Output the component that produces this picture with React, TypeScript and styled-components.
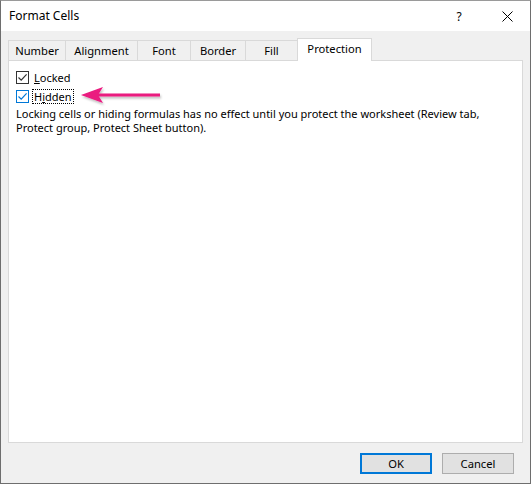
import React from "react"
import styled, { createGlobalStyle } from "styled-components"

const GlobalStyle = createGlobalStyle`
    html, body {
        margin: 0;
        padding: 0;
        background: #ffffff;
    }
    body {
        font-family: "Noto Sans", "Liberation Sans", sans-serif;
        font-size: 11px;
        color: #000000;
    }
`

const Window = styled.div`
    box-sizing: border-box;
    width: 531px;
    height: 484px;
    display: flex;
    flex-direction: column;
    border: 1px solid #6e6e6e;
    border-top-color: #9a9a9a;
    background: #f0f0f0;
`

const TitleBar = styled.div`
    height: 30px;
    flex-shrink: 0;
    display: flex;
    align-items: center;
    background: #ffffff;
    padding-left: 8px;
`

const Title = styled.div`
    flex: 1;
    font-size: 12px;
    color: #000000;
    padding-bottom: 1px;
`

const Help = styled.div`
    width: 46px;
    margin-right: 2px;
    text-align: center;
    font-size: 12px;
`

const Close = styled.div`
    width: 46px;
    display: flex;
    justify-content: center;
    align-items: center;
`

const Body = styled.div`
    flex: 1;
    display: flex;
    flex-direction: column;
    padding: 7px 7px 0 7px;
`

const TabStrip = styled.div`
    display: flex;
    align-items: flex-end;
    height: 22px;
    position: relative;
    z-index: 1;
`

const Tab = styled.div<{ $w: number; $active?: boolean }>`
    box-sizing: border-box;
    width: ${(p) => p.$w}px;
    height: ${(p) => (p.$active ? 23 : 20)}px;
    margin-left: -1px;
    margin-bottom: ${(p) => (p.$active ? -1 : 0)}px;
    padding-bottom: ${(p) => (p.$active ? 3 : 1)}px;
    display: flex;
    align-items: center;
    justify-content: center;
    background: ${(p) => (p.$active ? "#ffffff" : "#f0f0f0")};
    border: 1px solid #d9d9d9;
    border-bottom: none;
    font-size: 11.2px;
    &:first-child {
        margin-left: 0;
    }
`

const Panel = styled.div`
    flex: 1;
    position: relative;
    background: #ffffff;
    border: 1px solid #d9d9d9;
    padding: 7px 7px;
`

const Option = styled.label`
    display: flex;
    align-items: center;
    gap: 4px;
    height: 19px;
    font-size: 11px;
`

const Box = styled.span<{ $hot?: boolean }>`
    box-sizing: border-box;
    width: 13px;
    height: 13px;
    display: flex;
    align-items: center;
    justify-content: center;
    background: #ffffff;
    border: 1px solid ${(p) => (p.$hot ? "#0078d7" : "#333333")};
`

const Caption = styled.span<{ $focus?: boolean }>`
    padding: 0 1px;
    line-height: 13px;
    outline: ${(p) => (p.$focus ? "1px dotted #000000" : "none")};
    outline-offset: 0;
`

const Note = styled.p`
    margin: 1px 0 0 0;
    font-size: 11px;
    line-height: 14px;
`

const Arrow = styled.svg`
    position: absolute;
    left: 72px;
    top: 25px;
    overflow: visible;
`

const Footer = styled.div`
    box-sizing: border-box;
    height: 40px;
    flex-shrink: 0;
    display: flex;
    justify-content: flex-end;
    align-items: flex-start;
    gap: 10px;
    padding: 10px 16px 0 0;
`

const Button = styled.div<{ $default?: boolean }>`
    box-sizing: border-box;
    width: 72px;
    height: 21px;
    display: flex;
    align-items: center;
    justify-content: center;
    background: #e1e1e1;
    border: ${(p) => (p.$default ? "2px solid #0078d7" : "1px solid #adadad")};
    font-size: 11.2px;
`

const Check = ({ color }: { color: string }) => (
    <svg width="11" height="11" viewBox="0 0 11 11">
        <path d="M1.5 5.5 L4.2 8.2 L9.6 2.3" fill="none" stroke={color} strokeWidth="1.2" />
    </svg>
)

const tabs = [
    { name: "Number", w: 58 },
    { name: "Alignment", w: 73 },
    { name: "Font", w: 54 },
    { name: "Border", w: 56 },
    { name: "Fill", w: 53 },
    { name: "Protection", w: 75, active: true }
]

const App = () => (
    <>
        <GlobalStyle />
        <Window>
            <TitleBar>
                <Title>Format Cells</Title>
                <Help>?</Help>
                <Close>
                    <svg width="11" height="11" viewBox="0 0 11 11">
                        <path d="M0.5 0.5 L10.5 10.5 M10.5 0.5 L0.5 10.5" stroke="#000" strokeWidth="1" />
                    </svg>
                </Close>
            </TitleBar>
            <Body>
                <TabStrip>
                    {tabs.map((t) => (
                        <Tab key={t.name} $w={t.w} $active={t.active}>
                            {t.name}
                        </Tab>
                    ))}
                </TabStrip>
                <Panel>
                    <Option>
                        <Box><Check color="#333333" /></Box>
                        <Caption><u>L</u>ocked</Caption>
                    </Option>
                    <Option>
                        <Box $hot><Check color="#0078d7" /></Box>
                        <Caption $focus>H<u>i</u>dden</Caption>
                    </Option>
                    <Note>
                        Locking cells or hiding formulas has no effect until you protect the worksheet (Review tab,
                        <br />
                        Protect group, Protect Sheet button).
                    </Note>
                    {/* annotation arrow pointing at Hidden */}
                    <Arrow width="90" height="20" viewBox="0 0 90 20">
                        <defs>
                            <filter id="sh" x="-10%" y="-50%" width="130%" height="200%">
                                <feDropShadow dx="1" dy="2" stdDeviation="1.2" floodColor="#000" floodOpacity="0.25" />
                            </filter>
                        </defs>
                        <g filter="url(#sh)" fill="#ea1a7f">
                            <path d="M0 9 L22 1 L17 9 L22 17 Z" />
                            <rect x="16" y="7.5" width="63" height="3" />
                        </g>
                    </Arrow>
                </Panel>
            </Body>
            <Footer>
                <Button $default>OK</Button>
                <Button>Cancel</Button>
            </Footer>
        </Window>
    </>
)

export default App
